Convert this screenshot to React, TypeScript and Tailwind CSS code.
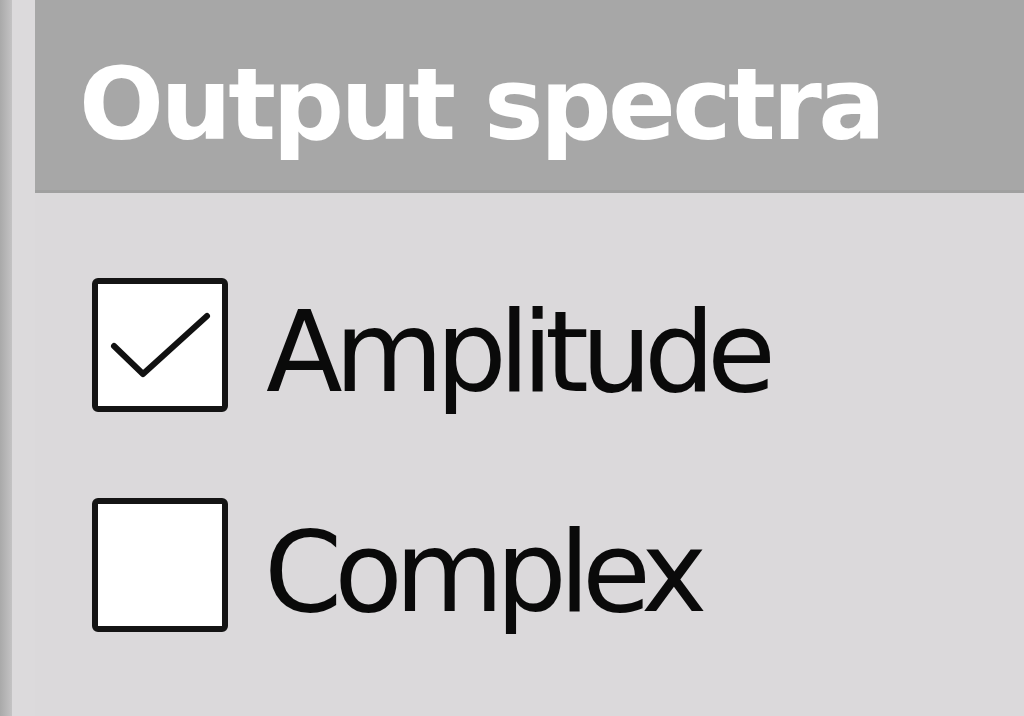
import React from "react";

function Box({ checked }: { checked: boolean }) {
  return (
    <div className="w-[136px] h-[134px] shrink-0 bg-white border-[6px] border-[#141414] rounded-[6px] flex items-center justify-center">
      {checked && (
        <svg width="124" height="122" viewBox="0 0 124 122" className="block">
          <polyline points="16,62 45,90 109,32" fill="none" stroke="#111" strokeWidth="6" strokeLinecap="round" strokeLinejoin="round" />
        </svg>
      )}
    </div>
  );
}

export default function App() {
  const font = { fontFamily: '"DejaVu Sans", Verdana, sans-serif' };
  return (
    <div className="w-[1024px] h-[716px] flex bg-[#dbd9db] overflow-hidden" style={font}>
      <div className="w-[12px] h-full bg-gradient-to-r from-[#a9a9a9] to-[#c4c3c4]" />
      <div className="w-[23px] h-full bg-[#dcdadc]" />
      <div className="flex-1 flex flex-col">
        <div className="h-[193px] bg-[#a7a7a7] flex items-center pl-[44px] pt-[20px] border-b-[3px] border-[#a0a0a0]">
          <span className="text-white font-bold text-[100px] leading-none tracking-[-3.5px]">Output spectra</span>
        </div>
        <div className="flex flex-col pl-[57px] pt-[85px] gap-[86px]">
          <div className="flex items-center gap-[38px]">
            <Box checked />
            <span className="text-[#0a0a0a] text-[112px] leading-none tracking-[-8px] pt-[14px]">Amplitude</span>
          </div>
          <div className="flex items-center gap-[36px]">
            <Box checked={false} />
            <span className="text-[#0a0a0a] text-[112px] leading-none tracking-[-8px] pt-[14px]">Complex</span>
          </div>
        </div>
      </div>
    </div>
  );
}
